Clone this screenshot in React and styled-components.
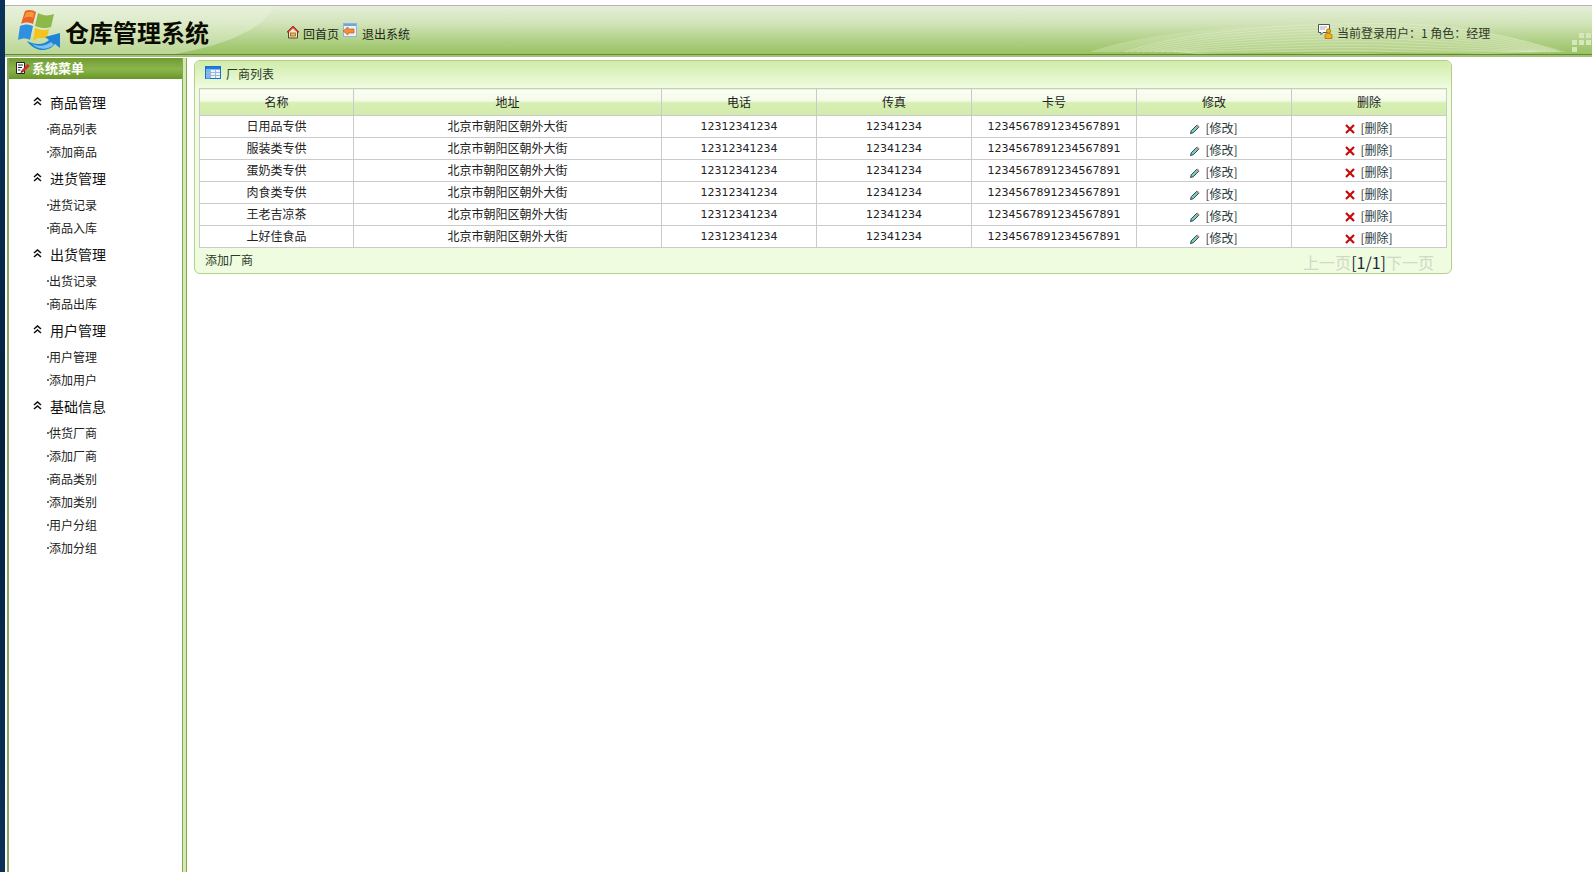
import React from "react";
import styled, { createGlobalStyle } from "styled-components";

const GlobalStyle = createGlobalStyle`
  html, body {
    margin: 0;
    padding: 0;
    height: 100%;
    overflow: hidden;
    background: #fff;
  }
  body {
    font-family: "Noto Sans CJK SC", "Liberation Sans", sans-serif;
    font-size: 12px;
    color: #222;
  }
`;

const Page = styled.div`
  width: 1592px;
  height: 872px;
  display: flex;
  flex-direction: column;
  background: #fff;
`;

const TopStrip = styled.div`
  height: 5px;
  flex: none;
  background: #fff;
  border-bottom: 1px solid #b4b4b4;
  margin-left: 5px;
`;

const Shell = styled.div`
  flex: 1;
  display: flex;
  min-height: 0;
  margin-top: -6px;
`;

const NavyEdge = styled.div`
  width: 5px;
  flex: none;
  background: linear-gradient(180deg, #0a3158 0%, #04233f 50%, #0a3158 100%);
`;

const Body = styled.div`
  flex: 1;
  display: flex;
  flex-direction: column;
  min-width: 0;
  padding-top: 6px;
`;

const Header = styled.header`
  position: relative;
  height: 48px;
  flex: none;
  display: flex;
  align-items: center;
  overflow: hidden;
  background: linear-gradient(180deg, #e4eed8 0%, #d3e4bb 35%, #a8cc7a 80%, #9ac264 100%);
  border-bottom: 1px solid #5f8c2c;
`;

const HeaderLine = styled.div`
  height: 2px;
  flex: none;
  background: #a6bf7c;
`;

const HeaderArt = styled.svg`
  position: absolute;
  left: 0;
  top: 0;
  width: 100%;
  height: 100%;
`;

const Brand = styled.div`
  position: relative;
  width: 277px;
  flex: none;
  display: flex;
  align-items: center;
  padding-left: 13px;
  gap: 3px;
  box-sizing: border-box;
  height: 100%;
`;

const BrandName = styled.h1`
  margin: 0;
  font-size: 24px;
  line-height: 30px;
  font-weight: 700;
  color: #0b0b00;
  letter-spacing: 0;
  position: relative;
  top: 2px;
`;

const HeaderLinks = styled.nav`
  position: relative;
  display: flex;
  align-items: center;
  gap: 3px;
  margin-top: 4px;
  margin-left: 4px;
`;

const HeaderLink = styled.a`
  display: flex;
  align-items: center;
  gap: 2px;
  color: #22261a;
  font-size: 12px;
  line-height: 16px;
  span {
    position: relative;
    top: 2px;
    margin-left: ${(p) => p.$textGap || 0}px;
  }
  svg {
    position: relative;
    top: ${(p) => p.$iconTop || 0}px;
  }
`;

const UserInfo = styled.div`
  position: absolute;
  left: 1313px;
  top: 17px;
  display: flex;
  align-items: center;
  gap: 4px;
  color: #33392a;
  font-size: 12px;
  line-height: 16px;
  white-space: nowrap;
  span {
    position: relative;
    top: 2px;
  }
`;

const Dots = styled.div`
  position: absolute;
  right: 1px;
  bottom: 2px;
  display: grid;
  grid-template-columns: repeat(3, 5px);
  grid-template-rows: repeat(3, 5px);
  gap: 2px;
`;

const Dot = styled.i`
  background: ${(p) => (p.$off ? "transparent" : "#d6e6bd")};
`;

const Main = styled.div`
  flex: 1;
  display: flex;
  min-height: 0;
`;

const Sidebar = styled.aside`
  width: 177px;
  flex: none;
  margin-top: 1px;
  box-sizing: border-box;
  background: #fff;
  border-left: 1px solid #fff;
  display: flex;
  flex-direction: column;
  padding-left: 3px;
  position: relative;
  &::before {
    content: "";
    position: absolute;
    left: 1px;
    top: 0;
    bottom: 0;
    width: 2px;
    background: #88a862;
  }
`;

const SideTitle = styled.div`
  height: 21px;
  flex: none;
  box-sizing: border-box;
  display: flex;
  align-items: center;
  gap: 2px;
  padding-left: 7px;
  padding-bottom: 1px;
  color: #fff;
  font-weight: 700;
  font-size: 13px;
  background: linear-gradient(180deg, #6f9a32 0%, #8cb64d 55%, #6c9a2c 100%);
  border-bottom: 1px solid #6b9530;
`;

const MenuList = styled.ul`
  list-style: none;
  margin: 0;
  padding: 11px 0 0 0;
`;

const MenuSection = styled.li`
  margin: 0 0 3px;
`;

const SectionTitle = styled.div`
  height: 27px;
  display: flex;
  align-items: center;
  padding-left: 24px;
  gap: 8px;
  font-size: 14px;
  color: #111;
  box-sizing: border-box;
  padding-bottom: 4px;
`;

const MenuItem = styled.a`
  display: block;
  height: 23px;
  line-height: 23px;
  padding-left: 38px;
  font-size: 12px;
  color: #222;
  &::before {
    content: "";
    display: inline-block;
    width: 2px;
    height: 2px;
    margin: 0 0 3px 0;
    background: #3a7f8f;
    vertical-align: middle;
  }
`;

const Divider = styled.div`
  width: 3px;
  flex: none;
  box-sizing: content-box;
  margin-top: 1px;
  background: #d6e9b4;
  border-left: 1px solid #83ac4f;
  border-right: 1px solid #83ac4f;
`;

const Content = styled.main`
  flex: 1;
  min-width: 0;
  padding: 3px 0 0 7px;
`;

const Panel = styled.section`
  width: 1258px;
  box-sizing: border-box;
  border: 1px solid #b3cf8b;
  border-radius: 6px;
  background: #effcdf;
  overflow: hidden;
`;

const PanelTitle = styled.div`
  height: 25px;
  padding-bottom: 2px;
  display: flex;
  align-items: center;
  gap: 5px;
  padding-left: 10px;
  font-size: 12px;
  color: #2c3a2a;
  background: linear-gradient(180deg, #d0ecaa 0%, #effcdf 100%);
  svg {
    position: relative;
    top: -1px;
  }
`;

const Grid = styled.table`
  width: 1247px;
  margin-left: 4px;
  table-layout: fixed;
  border-collapse: collapse;
  background: #fff;
  border: 1px solid #cacaca;
  th, td {
    border: 1px solid #cacaca;
    padding: 0;
    text-align: center;
    font-size: 12px;
    white-space: nowrap;
  }
`;

const HeadCell = styled.th`
  && {
    padding-bottom: 2px;
  }
  height: 24px;
  font-weight: 400;
  color: #222;
  background: linear-gradient(180deg, #fbfff4 0%, #f3fbe6 45%, #d7efb3 50%, #d3ecad 100%);
`;

const Cell = styled.td`
  && {
    padding-bottom: 2px;
  }
  height: 19px;
  line-height: 19px;
  color: #222;
`;

const NumberCell = styled(Cell)`
  &&& {
    font-family: "DejaVu Sans", sans-serif;
    font-size: 11px;
    padding-bottom: 0;
  }
`;

const ActionCell = styled(Cell)`
  color: #2a3a3a;
  span {
    position: relative;
    top: 2px;
  }
  svg {
    vertical-align: middle;
    position: relative;
    top: 1px;
    margin-right: 5px;
  }
`;

const PanelFooter = styled.div`
  height: 25px;
  display: flex;
  justify-content: space-between;
  padding: 0 17px 0 10px;
`;

const AddLink = styled.a`
  font-size: 12px;
  line-height: 23px;
  color: #2c3a2a;
`;

const Pager = styled.div`
  font-size: 16px;
  line-height: 28px;
  color: #1a2a3a;
`;

const PagerOff = styled.span`
  color: #d2d8c8;
`;

function WindowsLogo() {
  return (
    <svg width="44" height="44" viewBox="0 0 44 44">
      <path d="M7 3 C11 1 15 2 18 4 L15 16 C11 14 6 14 3 16 Z" fill="#e8622a" />
      <path d="M8 5 C11 3 14 4 16 5 L15 10 C12 8 9 9 6 10 Z" fill="#f59a3a" />
      <path d="M20 5 C25 8 31 8 36 6 L33 19 C28 21 22 20 17 18 Z" fill="#8eb84a" />
      <path d="M2 18 C7 16 11 16 15 18 L12 32 C9 30 4 30 0 32 Z" fill="#2f8fe0" />
      <path d="M17 20 C22 22 27 23 31 21 L29 30 L20 30 L15 33 Z" fill="#f5c31e" />
      <path d="M9 33 C17 37 26 37 31 32 L27 29 L42 25 L42 40 L37 36 C31 44 17 45 9 33 Z" fill="#1f84d6" />
      <path d="M14 36 C21 39 28 38 33 34 L36 37 C29 42 20 42 14 36 Z" fill="#7cc3f2" />
    </svg>
  );
}

function HomeIcon() {
  return (
    <svg width="14" height="14" viewBox="0 0 14 14">
      <path d="M7 1 L13 7 L11.5 7 L11.5 13 L2.5 13 L2.5 7 L1 7 Z" fill="#f3e4c6" stroke="#6a3a3a" strokeWidth="1" />
      <path d="M7 1 L13 7 L11 7 L7 3.2 L3 7 L1 7 Z" fill="#d5392c" />
      <rect x="4.5" y="8" width="5" height="3" fill="#f2c230" stroke="#7a5a20" strokeWidth="0.7" />
    </svg>
  );
}

function ExitIcon() {
  return (
    <svg width="15" height="15" viewBox="0 0 15 15">
      <rect x="1.5" y="0.5" width="13" height="13" fill="#eaf3fb" stroke="#8fb4dc" />
      <rect x="2" y="1" width="12" height="2" fill="#6fa5dc" />
      <path d="M1 8 L6 4 L6 6 L12 6 L12 10 L6 10 L6 12 Z" fill="#f0903a" stroke="#c85a18" strokeWidth="0.7" />
    </svg>
  );
}

function UserIcon() {
  return (
    <svg width="15" height="15" viewBox="0 0 15 15">
      <path d="M0.5 0.5 H11.5 V8.5 H5 L3 10.5 V8.5 H0.5 Z" fill="#fff" stroke="#555" strokeWidth="1" />
      <path d="M2 3 H9 M2 5 H7" stroke="#aaa" strokeWidth="1" />
      <circle cx="10.5" cy="7" r="2.2" fill="#f0a810" stroke="#8a5a10" strokeWidth="0.6" />
      <path d="M7 14.5 V11.5 C7 10 8.5 9.5 10.5 9.5 C12.5 9.5 14 10 14 11.5 V14.5 Z" fill="#f5b010" stroke="#8a5a10" strokeWidth="0.6" />
    </svg>
  );
}

function MenuIcon() {
  return (
    <svg width="14" height="13" viewBox="0 0 14 13">
      <path d="M0.5 1.5 H8.5 V12.5 H0.5 Z" fill="#fff" stroke="#222" strokeWidth="1" />
      <path d="M2 4 H7 M2 6.5 H6 M2 9 H4.5" stroke="#222" strokeWidth="1" />
      <path d="M5.5 9.5 L11.5 3 L13.8 5 L7.5 11 Z" fill="#e0242c" />
      <path d="M4.5 12 L5.5 9.5 L7.5 11 Z" fill="#222" />
    </svg>
  );
}

function TableIcon() {
  return (
    <svg width="16" height="13" viewBox="0 0 16 13">
      <rect x="0.5" y="0.5" width="15" height="12" fill="#eef3fa" stroke="#1a6fd0" />
      <rect x="1" y="1" width="14" height="2.5" fill="#1a7fe0" />
      <rect x="1" y="3.5" width="4" height="9" fill="#7db6ee" />
      <path d="M5.5 3.5 V12 M10.5 3.5 V12 M1 6.5 H15 M1 9.5 H15" stroke="#9ab8d8" strokeWidth="1" />
    </svg>
  );
}

function Chevrons() {
  return (
    <svg width="9" height="9" viewBox="0 0 9 9" fill="none" stroke="#111" strokeWidth="1.6">
      <path d="M1 4 L4.5 1 L8 4" />
      <path d="M1 8 L4.5 5 L8 8" />
    </svg>
  );
}

function PencilIcon() {
  return (
    <svg width="10" height="10" viewBox="0 0 10 10">
      <path d="M0.5 9.5 L1.2 6.8 L6.8 1.2 L8.8 3.2 L3.2 8.8 Z" fill="#7ec8c4" stroke="#1c3a3a" strokeWidth="0.9" />
      <path d="M6.8 1.2 L7.6 0.5 L9.5 2.4 L8.8 3.2 Z" fill="#e88a8a" />
    </svg>
  );
}

function CrossIcon() {
  return (
    <svg width="10" height="10" viewBox="0 0 10 10">
      <path d="M1 1 L9 9 M9 1 L1 9" stroke="#c40a0a" strokeWidth="2.2" />
    </svg>
  );
}

const menu = [
  { title: "商品管理", items: ["商品列表", "添加商品"] },
  { title: "进货管理", items: ["进货记录", "商品入库"] },
  { title: "出货管理", items: ["出货记录", "商品出库"] },
  { title: "用户管理", items: ["用户管理", "添加用户"] },
  { title: "基础信息", items: ["供货厂商", "添加厂商", "商品类别", "添加类别", "用户分组", "添加分组"] },
];

const columns = [
  { name: "名称", width: 154 },
  { name: "地址", width: 308 },
  { name: "电话", width: 155 },
  { name: "传真", width: 155 },
  { name: "卡号", width: 165 },
  { name: "修改", width: 155 },
  { name: "删除", width: 155 },
];

const vendors = ["日用品专供", "服装类专供", "蛋奶类专供", "肉食类专供", "王老吉凉茶", "上好佳食品"];

const dots = [false, true, true, true, true, true, true, false, false];

// fine hatching on the right hand wave of the banner
const hatch = Array.from({ length: 11 }, (_, i) => {
  const d = i * 3;
  return `M${1120 + d * 2} 46 C${1190 + d} ${22 + d} ${1310} ${16 + d} ${1400 - d} ${18 + d} C${1470 - d} ${21 + d} ${1525 - d} ${36 + d / 3} ${1555 - d} 46`;
});

export default function App() {
  return (
    <Page>
      <GlobalStyle />
      <TopStrip />
      <Shell>
        <NavyEdge />
        <Body>
          <Header>
            <HeaderArt viewBox="0 0 1587 48" preserveAspectRatio="none">
              <path d="M0 0 H270 C258 22 225 38 170 48 H0 Z" fill="#eef4e2" opacity="0.4" />
              <path d="M1085 46 C1150 22 1300 14 1400 17 C1470 20 1530 36 1561 46 Z" fill="#d6e7ba" opacity="0.4" />
              {hatch.map((d) => (
                <path key={d} d={d} fill="none" stroke="#eef5e0" strokeWidth="0.8" opacity="0.45" />
              ))}
            </HeaderArt>
            <Brand>
              <WindowsLogo />
              <BrandName>仓库管理系统</BrandName>
            </Brand>
            <HeaderLinks>
              <HeaderLink $textGap={1}>
                <HomeIcon />
                <span>回首页</span>
              </HeaderLink>
              <HeaderLink $textGap={3} $iconTop={-2}>
                <ExitIcon />
                <span>退出系统</span>
              </HeaderLink>
            </HeaderLinks>
            <UserInfo>
              <UserIcon />
              <span>当前登录用户：1 角色：经理</span>
            </UserInfo>
            <Dots>
              {dots.map((on, i) => (
                <Dot key={i} $off={!on} />
              ))}
            </Dots>
          </Header>
          <HeaderLine />
          <Main>
            <Sidebar>
              <SideTitle>
                <MenuIcon />
                系统菜单
              </SideTitle>
              <MenuList>
                {menu.map((section) => (
                  <MenuSection key={section.title}>
                    <SectionTitle>
                      <Chevrons />
                      {section.title}
                    </SectionTitle>
                    {section.items.map((item) => (
                      <MenuItem key={item}>{item}</MenuItem>
                    ))}
                  </MenuSection>
                ))}
              </MenuList>
            </Sidebar>
            <Divider />
            <Content>
              <Panel>
                <PanelTitle>
                  <TableIcon />
                  厂商列表
                </PanelTitle>
                <Grid>
                  <colgroup>
                    {columns.map((c) => (
                      <col key={c.name} style={{ width: c.width }} />
                    ))}
                  </colgroup>
                  <thead>
                    <tr>
                      {columns.map((c) => (
                        <HeadCell key={c.name}>{c.name}</HeadCell>
                      ))}
                    </tr>
                  </thead>
                  <tbody>
                    {vendors.map((name) => (
                      <tr key={name}>
                        <Cell>{name}</Cell>
                        <Cell>北京市朝阳区朝外大街</Cell>
                        <NumberCell>12312341234</NumberCell>
                        <NumberCell>12341234</NumberCell>
                        <NumberCell>1234567891234567891</NumberCell>
                        <ActionCell>
                          <PencilIcon />
                          <span>[修改]</span>
                        </ActionCell>
                        <ActionCell>
                          <CrossIcon />
                          <span>[删除]</span>
                        </ActionCell>
                      </tr>
                    ))}
                  </tbody>
                </Grid>
                <PanelFooter>
                  <AddLink>添加厂商</AddLink>
                  <Pager>
                    <PagerOff>上一页</PagerOff>[1/1]<PagerOff>下一页</PagerOff>
                  </Pager>
                </PanelFooter>
              </Panel>
            </Content>
          </Main>
        </Body>
      </Shell>
    </Page>
  );
}
